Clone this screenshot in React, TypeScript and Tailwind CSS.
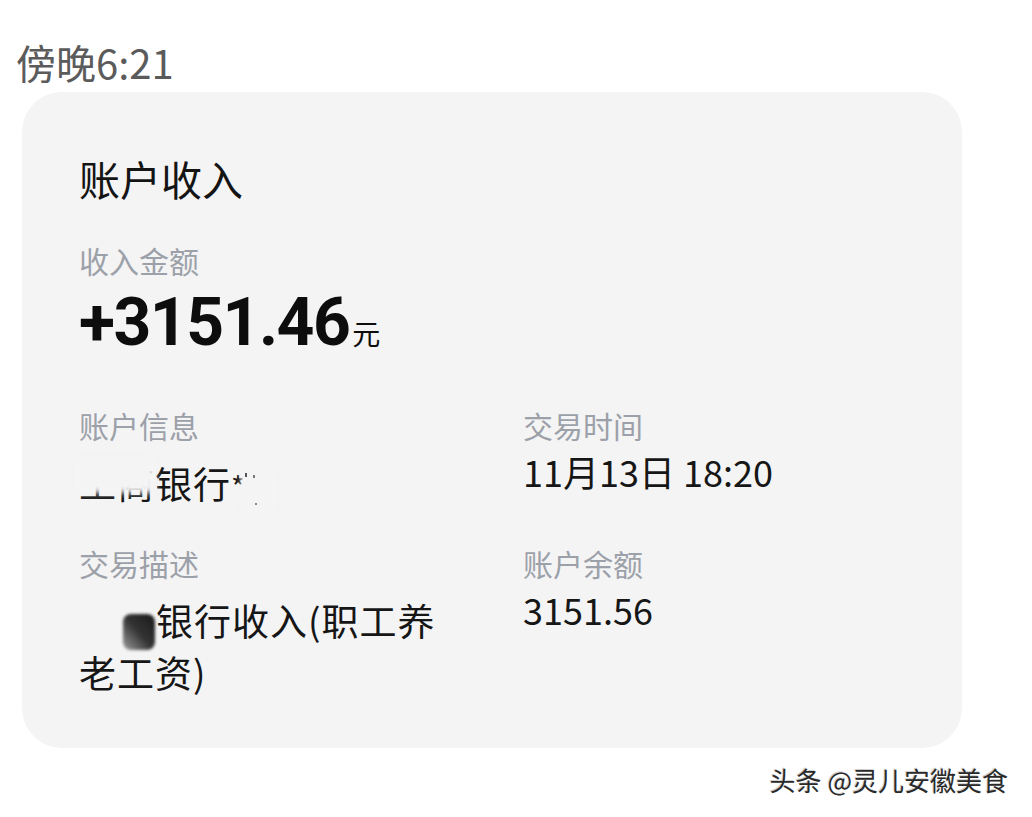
const font = { fontFamily: '"Noto Sans CJK SC", "Noto Sans", sans-serif' };

const Label: React.FC<{ text: string }> = ({ text }) => (
  <div className="text-[30px] leading-[36px] text-[#9ca1a9]">{text}</div>
);

const App: React.FC = () => {
  return (
    <div className="w-[1032px] h-[817px] bg-white overflow-hidden" style={font}>
      {/* Time stamp */}
      <div className="pt-[40px] pl-[16px] text-[40px] leading-[44px] text-[#5b5b5b]">傍晚6:21</div>

      {/* Card */}
      <div className="ml-[22px] mt-[8px] w-[940px] h-[656px] rounded-[40px] bg-[#f4f4f5] pl-[57px] pt-[66px]">
        <div className="text-[41px] leading-[40px] text-[#141414]">账户收入</div>

        <div className="mt-[44px]">
          <Label text="收入金额" />
        </div>
        <div className="mt-[13px] flex items-baseline text-[#0d0d0d]">
          <span className="text-[66px] leading-[64px] font-bold tracking-[-1.5px]" style={{ fontFamily: 'Roboto, "Noto Sans", sans-serif' }}>
            +3151.46
          </span>
          <span className="ml-[3px] text-[28px] leading-[28px]">元</span>
        </div>

        <div className="mt-[52px] grid grid-cols-[444px_1fr] text-[#161616]">
          <div className="h-[138px]">
            <Label text="账户信息" />
            <div className="relative mt-[20px] text-[37px] leading-[40px] tracking-[1px] w-fit">
              工商银行<span className="text-[30px]">*</span>
              {/* masked parts */}
              <div className="absolute left-[-4px] top-[-6px] w-[80px] h-[36px] bg-[#f4f4f5] blur-[3px]"></div>
              <div className="absolute left-[162px] top-[8px] w-[36px] h-[40px] bg-[#f4f4f5] blur-[2px]"></div>
              <div className="absolute left-[166px] top-[10px] w-[2px] h-[4px] bg-[#555]"></div>
              <div className="absolute left-[174px] top-[12px] w-[2px] h-[3px] bg-[#777]"></div>
              <div className="absolute left-[176px] top-[40px] w-[2px] h-[2px] bg-[#888]"></div>
            </div>
          </div>
          <div>
            <Label text="交易时间" />
            <div className="mt-[8px] text-[36px] leading-[40px]">11月13日 18:20</div>
          </div>

          <div>
            <Label text="交易描述" />
            <div className="relative mt-[13px] w-[380px] text-[37px] leading-[52px] tracking-[1px]">
              <span className="inline-block w-[77px]"></span>银行收入(职工养老工资)
              <div className="absolute left-[44px] top-[20px] w-[32px] h-[36px] rounded-[8px] bg-gradient-to-bl from-[#1a1a1a] via-[#333333] to-[#a0a0a0] blur-[1.5px]"></div>
            </div>
          </div>
          <div>
            <Label text="账户余额" />
            <div className="mt-[8px] text-[36px] leading-[40px]">3151.56</div>
          </div>
        </div>
      </div>

      {/* Watermark */}
      <div className="mt-[17px] flex justify-end pr-[24px]">
        <span className="text-[26px] leading-[30px] text-[#2a2a2a] [text-shadow:1px_1px_0_#ffffff,-1px_-1px_0_#cfcfcf]">
          头条 @灵儿安徽美食
        </span>
      </div>
    </div>
  );
};

export default App;
